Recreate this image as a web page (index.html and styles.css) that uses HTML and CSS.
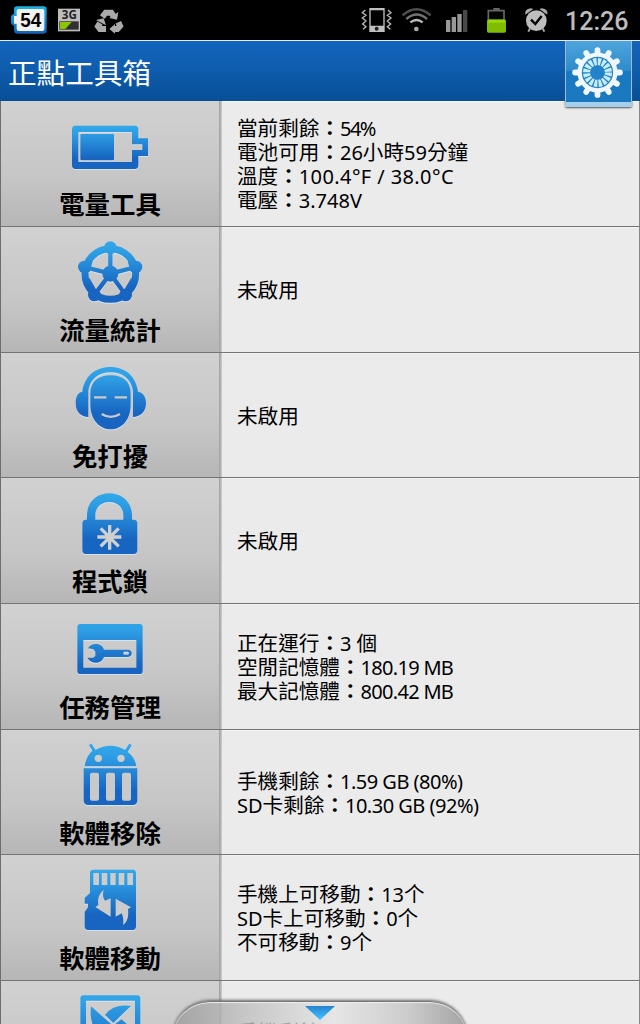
FILE: index.html
```html
<!DOCTYPE html>
<html lang="zh-Hant">

<head>
    <meta charset="UTF-8">
    <meta name="viewport" content="width=device-width, initial-scale=1.0">
    <title>正點工具箱</title>
    <link rel="stylesheet" href="styles.css">
</head>

<body>
    <div class="status">
        <svg class="status-left" viewBox="0 0 390 120">
            <defs>
                <linearGradient id="cell" x1="0" y1="0" x2="0" y2="1">
                    <stop offset="0" stop-color="#19b5e4" />
                    <stop offset="1" stop-color="#1560b4" />
                </linearGradient>
            </defs>
            <path d="M52 19H130Q140 19 140 29V91Q140 101 130 101H52Q42 101 42 91V77Q33 75 33 67V52Q33 44 42 42V29Q42 19 52 19Z" fill="url(#cell)" />
            <path d="M56 27H127Q133 27 133 33V86Q133 93 127 93H56Q50 93 50 86V71H42V48H50V33Q50 27 56 27Z" fill="#f2f2f2" />
            <text x="92" y="82" class="badge-num" textLength="63" lengthAdjust="spacingAndGlyphs">54</text>
            <rect x="174" y="26" width="66" height="68" fill="#bdbdbd" />
            <text x="208" y="57" class="badge-3g" textLength="45" lengthAdjust="spacingAndGlyphs">3G</text>
            <rect x="178" y="64" width="58" height="25" fill="#303030" />
            <path d="M180 66H215L196 87H180Z" fill="#8bc400" />
            <path d="M307 51L317 38H334L341 49M355 67L360 78L352 87H342M318 87H300L294 79L300 69" fill="none" stroke="#aaa" stroke-width="18" />
            <path d="M355 36L351 59L328 54ZM345 72V101L328 87ZM288 60L311 55L318 76Z" fill="#aaa" />
        </svg>
        <svg class="status-right" viewBox="110 0 600 120">
            <path d="M147 24H193V96H147Z M151 31V77H189V31Z" fill="#c0c0c0" fill-rule="evenodd" />
            <circle cx="169" cy="86" r="6" fill="#222" />
            <path d="M135 30L126 38L137 46L126 54L137 63L127 72L137 80L128 88M203 30L212 38L201 46L212 54L201 63L211 72L201 80L210 88" fill="none" stroke="#bbb" stroke-width="4" />
            <g fill="none" stroke-width="7">
                <path d="M247 46Q288 10 331 46" stroke="#505050" />
                <path d="M258 57Q289 30 320 57" stroke="#747474" />
                <path d="M270 67Q289 53 307 67" stroke="#bbb" />
            </g>
            <circle cx="288" cy="87" r="7" fill="#aaa" />
            <path d="M377 60H390V96H377ZM394 51H407V96H394ZM411 42H424V96H411Z" fill="#989898" />
            <path d="M428 30H441V96H428Z" fill="#484848" />
            <path d="M504 59V32H551V59" fill="#050505" stroke="#666" stroke-width="5" />
            <rect x="519" y="24" width="19" height="9" fill="#666" />
            <rect x="500" y="58" width="57" height="40" rx="5" fill="#80bd00" />
            <rect x="504" y="60" width="49" height="8" fill="#9ad80e" />
            <circle cx="648" cy="62" r="31" fill="#bdbdbd" />
            <path d="M615 44Q612 27 631 25L639 27ZM681 44Q684 27 665 25L657 27Z" fill="#aaa" />
            <path d="M629 85L624 95M667 85L672 95" stroke="#aaa" stroke-width="6" />
            <path d="M632 59L645 72L664 48" fill="none" stroke="#000" stroke-width="7" />
        </svg>
        <span class="clock">12:26</span>
    </div>

    <div class="header">
        <h1>正點工具箱</h1>
        <div class="settings">
            <svg viewBox="-75 -75 150 150">
                <g stroke="#f2f8ff" stroke-width="17" stroke-linecap="round">
                    <path d="M0 -66V66M-66 0H66M-57 -33L57 33M-57 33L57 -33M-33 -57L33 57M-33 57L33 -57" />
                </g>
                <circle r="59" fill="#f2f8ff" />
                <circle r="46" fill="#2482c8" />
                <circle r="32" fill="none" stroke="#c8edfc" stroke-width="21" stroke-dasharray="9 3.57" />
                <circle r="20" fill="#2482ca" />
            </svg>
        </div>
    </div>

    <svg class="defs">
        <defs>
            <linearGradient id="blue" gradientUnits="userSpaceOnUse" x1="0" y1="45" x2="0" y2="230">
                <stop offset="0" stop-color="#33a8eb" />
                <stop offset=".2" stop-color="#2d9ce3" />
                <stop offset=".75" stop-color="#1765c0" />
                <stop offset="1" stop-color="#1765c0" />
            </linearGradient>
            <linearGradient id="blueBattery" gradientUnits="userSpaceOnUse" x1="0" y1="77" x2="0" y2="207">
                <stop offset="0" stop-color="#33a8eb" />
                <stop offset=".2" stop-color="#2d9ce3" />
                <stop offset=".75" stop-color="#1765c0" />
                <stop offset="1" stop-color="#1765c0" />
            </linearGradient>
            <linearGradient id="blueLast" gradientUnits="userSpaceOnUse" x1="0" y1="424" x2="0" y2="600">
                <stop offset="0" stop-color="#33a8eb" />
                <stop offset="1" stop-color="#1765c0" />
            </linearGradient>
        </defs>
    </svg>

    <div class="list">
        <div class="row">
            <div class="tool">
                <svg viewBox="3 3 654 252" fill="url(#blueBattery)">
                    <path d="M226 77H404Q415 77 415 88V115H444V168H415V196Q415 207 404 207H226Q216 207 216 196V88Q216 77 226 77ZM235 96V186H396V150H427V133H396V96Z" fill-rule="evenodd" />
                    <rect x="241" y="102" width="101" height="79" rx="4" />
                </svg>
                <span>電量工具</span>
            </div>
            <div class="info">
                <p>當前剩餘<b>：</b><span class="s1">54%</span></p>
                <p>電池可用<b>：</b><span class="s2">26</span>小時<span class="s2">59</span>分鐘</p>
                <p>溫度<b>：</b><span class="s3">100.4°F / 38.0°C</span></p>
                <p>電壓<b>：</b><span class="s4">3.748V</span></p>
            </div>
        </div>

        <div class="row">
            <div class="tool">
                <svg viewBox="3 3 654 252" fill="url(#blue)">
                    <circle cx="331" cy="144" r="76" fill="none" stroke="url(#blue)" stroke-width="21" />
                    <circle cx="331" cy="65" r="19" />
                    <circle cx="253" cy="123" r="19" />
                    <circle cx="408" cy="123" r="19" />
                    <circle cx="283" cy="207" r="19" />
                    <circle cx="377" cy="207" r="19" />
                    <circle cx="331" cy="143" r="24" />
                    <path d="M331 143L331.1 65M331 143L253 123M331 143L408 123M331 143L283 207M331 143L377 207" stroke="url(#blue)" stroke-width="13" />
                    <path d="M271 104L262 136M390 104L400 136M262 160L285 200M400 160L376 200" stroke="url(#blue)" stroke-width="15" />
                </svg>
                <span>流量統計</span>
            </div>
            <div class="info">
                <p>未啟用</p>
            </div>
        </div>

        <div class="row short">
            <div class="tool">
                <svg viewBox="3 3 654 252" fill="url(#blue)">
                    <path d="M332 70C370 70 392 90 392 124V158C392 205 363 232 332 232S271 205 271 158V124C271 90 294 70 332 70Z" />
                    <path d="M247 119C253 73 286 45 331 45S408 73 414 119C430 122 438 135 438 153C438 178 423 194 399 195V117C394 82 368 61 332 61S269 82 265 117V195C240 194 227 178 227 153C227 135 233 122 247 119Z" />
                    <path d="M282 136H319M344 136H381M305 186Q332 203 360 186" fill="none" stroke="#c9c9c9" stroke-width="7" />
                </svg>
                <span>免打擾</span>
            </div>
            <div class="info">
                <p>未啟用</p>
            </div>
        </div>

        <div class="row">
            <div class="tool">
                <svg viewBox="3 0 654 252" fill="url(#blue)">
                    <path d="M261 125V112C261 73 290 46 328 46S396 73 396 112V125H401Q412 125 412 137V216Q412 228 401 228H258Q247 228 247 216V137Q247 125 258 125ZM286 125H370V112C370 88 352 72 328 72S286 88 286 112Z" fill-rule="evenodd" />
                    <path d="M329 141V215M292 177H364M302 151L356 205M356 151L302 205" stroke="#d0d0d0" stroke-width="10" />
                </svg>
                <span>程式鎖</span>
            </div>
            <div class="info">
                <p>未啟用</p>
            </div>
        </div>

        <div class="row">
            <div class="tool">
                <svg viewBox="3 0 654 252" fill="url(#blue)">
                    <path d="M241 60H419Q428 60 428 69V200Q428 210 419 210H241Q232 210 232 200V69Q232 60 241 60ZM250 108V191H409V108Z" fill-rule="evenodd" />
                    <path d="M264 133C273 117 303 114 312 137H384Q395 138 395 148T384 159H312C302 184 272 180 262 161H280L286 155V143L280 136ZM372 143Q367 148 372 152H384Q390 148 384 143Z" fill-rule="evenodd" />
                </svg>
                <span>任務管理</span>
            </div>
            <div class="info">
                <p>正在運行<b>：</b><span class="s5">3 </span>個</p>
                <p>空閒記憶體<b>：</b><span class="s6">180.19 MB</span></p>
                <p>最大記憶體<b>：</b><span class="s6">800.42 MB</span></p>
            </div>
        </div>

        <div class="row short">
            <div class="tool">
                <svg viewBox="3 0 654 252" fill="url(#blue)">
                    <path d="M254 109C257 84 270 66 285 57L286 61L283 66L267 45L273 42L285 61Q330 34 376 60L388 42L395 45L382 65C397 76 407 90 409 109Z" />
                    <path d="M271 44L285 66M391 44L378 66" stroke="url(#blue)" stroke-width="9" />
                    <circle cx="295" cy="85" r="11" fill="#ccc" />
                    <circle cx="363" cy="85" r="11" fill="#ccc" />
                    <path d="M251 115H412V211Q412 225 398 225H265Q251 225 251 211Z" />
                    <g fill="#c9c9c9">
                        <rect x="270" y="128" width="27" height="84" rx="6" />
                        <rect x="318" y="128" width="27" height="84" rx="6" />
                        <rect x="366" y="128" width="27" height="84" rx="6" />
                    </g>
                </svg>
                <span>軟體移除</span>
            </div>
            <div class="info">
                <p>手機剩餘<b>：</b><span class="s7">1.59 GB (80%)</span></p>
                <p><span class="s8">SD</span>卡剩餘<b>：</b><span class="s9">10.30 GB (92%)</span></p>
            </div>
        </div>

        <div class="row">
            <div class="tool">
                <svg viewBox="3 3 654 252" fill="url(#blue)">
                    <path d="M281 47H398Q408 47 408 57V217Q408 228 398 228H265Q254 228 254 217V174L264 160V149H254V132L270 117V57Q270 47 281 47Z" />
                    <path d="M280 57H297V93H280ZM305 57H322V93H305ZM331 57H347V93H331ZM356 57H373V93H356ZM382 57H399V93H382ZM311 108C307 120 309 133 315 140L332 133V188L286 159L295 153C292 135 297 118 311 108ZM347 134L393 160L384 165C387 188 382 205 369 213C371 202 370 188 365 178L347 188Z" fill="#ccc" />
                </svg>
                <span>軟體移動</span>
            </div>
            <div class="info">
                <p>手機上可移動<b>：</b><span class="s2">13</span>个</p>
                <p><span class="s8">SD</span>卡上可移動<b>：</b><span class="s2">0</span>个</p>
                <p>不可移動<b>：</b><span class="s2">9</span>个</p>
            </div>
        </div>

        <div class="row">
            <div class="tool">
                <svg viewBox="3 381 654 252" fill="url(#blueLast)">
                    <path d="M251 424H411Q421 424 421 434V594Q421 604 411 604H251Q241 604 241 594V434Q241 424 251 424ZM258 440V588H405V440Z" fill-rule="evenodd" />
                    <path d="M273 457L333 510L308 560Q265 515 273 457ZM315 483Q340 449 393 456L340 507ZM343 512L364 496L392 520V570H300Z" />
                </svg>
            </div>
            <div class="info">
                <p>手機剩餘<b>：</b><span class="s7">1.59 GB (80%)</span></p>
                <p>&nbsp;</p>
            </div>
        </div>
    </div>

    <div class="drawer">
        <div class="tab">
            <div class="arrow"></div>
        </div>
    </div>
</body>

</html>
```

FILE: styles.css
```css
* {
    box-sizing: border-box;
}

body {
    margin: 0;
    width: 640px;
    height: 1024px;
    position: relative;
    overflow: hidden;
    background: #ebebeb;
    color: #000;
    font-family: "Noto Sans", "Noto Sans CJK TC", sans-serif;
}

.status {
    display: flex;
    height: 40px;
    background: #000;
}

.status-left {
    width: 130px;
    height: 40px;
    margin-right: 227px;
}

.status-right {
    width: 200px;
    height: 40px;
}

.badge-num {
    font: bold 62px "Liberation Sans", sans-serif;
    text-anchor: middle;
    fill: #000;
}

.badge-3g {
    font: bold 36px "Noto Sans", sans-serif;
    text-anchor: middle;
    fill: #222;
}

.clock {
    margin-left: 8px;
    color: #bdbdbd;
    font: 500 25px/43px Roboto, sans-serif;
}

.header {
    display: flex;
    justify-content: space-between;
    height: 61px;
    padding: 0 8px;
    border-top: 1px solid #e4edf5;
    background: linear-gradient(#1265bd, #0f5dae 45%, #074e96);
}

.header h1 {
    margin: 0;
    color: #fff;
    font: 400 28.6px/61px "Noto Sans CJK TC", sans-serif;
}

.settings {
    z-index: 1;
    width: 67px;
    height: 66px;
    padding: 6px 6px;
    border: 1px solid #8cc0e4;
    border-top: 0;
    border-bottom: 5px solid #a5d0ec;
    border-radius: 0 0 2px 2px;
    background: linear-gradient(#4da5dc, #2f8bcb 48%, #187ac2 50%, #1b78be);
    box-shadow: 0 1px 2px #555;
}

.settings svg {
    display: block;
    width: 51px;
    height: 51px;
}

.defs {
    position: absolute;
    width: 0;
    height: 0;
}

.list {
    height: 923px;
    overflow: hidden;
}

.row {
    display: flex;
    height: 126px;
    border-left: 1px solid #6e6e6e;
    border-right: 1px solid #888;
    border-bottom: 1px solid #747474;
}

.row.short {
    height: 125px;
}

.tool {
    display: flex;
    flex-direction: column;
    align-items: center;
    width: 221px;
    padding-right: 3px;
    background: linear-gradient(90deg, transparent 218px, #a2a2a2 218px, #a9a9a9 219px, #d0d0d0 221px),
        linear-gradient(#d1d1d1, #c6c6c6 60%, #b6b6b6);
}

.tool svg {
    flex: none;
    width: 218px;
    height: 84px;
    filter: drop-shadow(0 1px 0 #d8e2ee);
}

.tool span {
    font: 700 25.4px/36px "Noto Sans CJK TC", sans-serif;
}

.info {
    flex: 1;
    display: flex;
    flex-direction: column;
    justify-content: center;
    padding: 0 0 1px 15px;
    box-shadow: inset 0 1px 0 #f4f4f4;
    font-size: 20.6px;
    line-height: 24px;
}

.info p {
    margin: 0;
    height: 24px;
    white-space: nowrap;
    font-family: "Noto Sans CJK TC", sans-serif;
}

.info p span {
    font-family: "Noto Sans", sans-serif;
    font-size: 20px;
}

.s1 {
    letter-spacing: -1.5px;
}

.s3 {
    letter-spacing: 0.4px;
}

.s6 {
    letter-spacing: -0.7px;
}

.s7,
.s9 {
    letter-spacing: -0.5px;
}

/* clips the lower half of the tab */
.drawer {
    position: absolute;
    left: 168px;
    top: 997px;
    width: 304px;
    height: 27px;
    padding: 4px;
    overflow: hidden;
}

.tab {
    display: flex;
    justify-content: center;
    width: 296px;
    height: 60px;
    padding-top: 4px;
    border-top: 1px solid #777;
    border-radius: 38px 38px 0 0;
    background: linear-gradient(90deg, rgba(155, 155, 155, 0.85), rgba(190, 190, 190, 0.8) 25%, rgba(228, 228, 228, 0.75) 55%, rgba(190, 190, 190, 0.7) 80%, rgba(150, 150, 150, 0.85));
    box-shadow: inset 0 1px 1px #eee, 0 -1px 3px #666;
}

.arrow {
    width: 30px;
    height: 14px;
    background: linear-gradient(#2484cf, #45c4ff);
    clip-path: polygon(0 0, 100% 0, 50% 100%);
}
```
